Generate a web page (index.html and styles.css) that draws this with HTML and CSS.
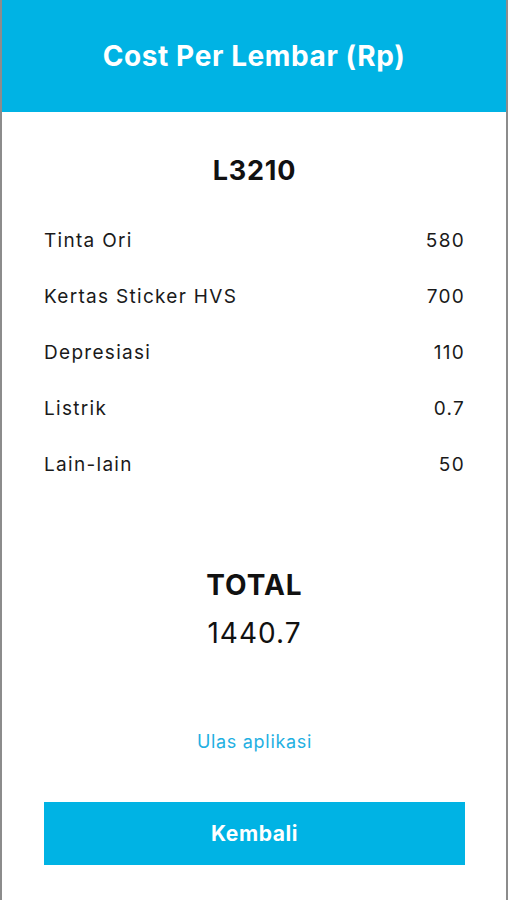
FILE: index.html
```html
<!DOCTYPE html>
<html>
<head>
    <meta charset="utf-8">
    <title>Cost Per Lembar</title>
    <link rel="stylesheet" href="styles.css">
</head>
<body>
<header class="topbar">
    <h1 class="topbar-title">Cost Per Lembar (Rp)</h1>
</header>
<main class="content">
    <h2 class="model">L3210</h2>
    <ul class="cost-list">
        <li class="cost-row"><span>Tinta Ori</span><span>580</span></li>
        <li class="cost-row"><span>Kertas Sticker HVS</span><span>700</span></li>
        <li class="cost-row"><span>Depresiasi</span><span>110</span></li>
        <li class="cost-row"><span>Listrik</span><span>0.7</span></li>
        <li class="cost-row"><span>Lain-lain</span><span>50</span></li>
    </ul>
    <div class="total">
        <div class="total-label">TOTAL</div>
        <div class="total-value">1440.7</div>
    </div>
    <a class="review-link" href="#">Ulas aplikasi</a>
    <button class="back-btn">Kembali</button>
</main>
</body>
</html>
```

FILE: styles.css
```css
html, body {
    margin: 0;
    padding: 0;
    height: 100%;
}
body {
    font-family: "Inter", "Lato", "Liberation Sans", sans-serif;
    color: #111;
    background: #fff;
    box-sizing: border-box;
    border-left: 2px solid #8c8c8c;
    border-right: 2px solid #8c8c8c;
}
.topbar {
    background: #00b3e4;
    height: 112px;
    margin: 0 -2px;
    display: flex;
    align-items: center;
    justify-content: center;
}
.topbar-title {
    margin: 0;
    color: #fff;
    font-size: 28px;
    font-weight: 700;
    letter-spacing: 0.6px;
}
.content {
    padding: 0 41px 0 42px;
    display: flex;
    flex-direction: column;
}
.model {
    margin: 44px 0 0;
    text-align: center;
    font-size: 27px;
    font-weight: 700;
    line-height: 30px;
    letter-spacing: 0.8px;
}
.cost-list {
    list-style: none;
    margin: 43px 0 0;
    padding: 0;
}
.cost-row {
    display: flex;
    justify-content: space-between;
    font-size: 19px;
    line-height: 24px;
    height: 56px;
    letter-spacing: 1.3px;
    color: #1a1a1a;
}
.total {
    margin-top: 61px;
    text-align: center;
}
.total-label {
    font-size: 28px;
    font-weight: 700;
    line-height: 30px;
    letter-spacing: 1px;
}
.total-value {
    margin-top: 18px;
    font-size: 28px;
    line-height: 30px;
    letter-spacing: 1px;
}
.review-link {
    margin-top: 84px;
    align-self: center;
    color: #1fb0e2;
    text-decoration: none;
    font-size: 18px;
    line-height: 20px;
    letter-spacing: 0.7px;
}
.back-btn {
    margin-top: 50px;
    height: 63px;
    border: none;
    background: #00b3e4;
    color: #fff;
    font: 700 21px "Inter", "Lato", "Liberation Sans", sans-serif;
    letter-spacing: 0.6px;
}
```
